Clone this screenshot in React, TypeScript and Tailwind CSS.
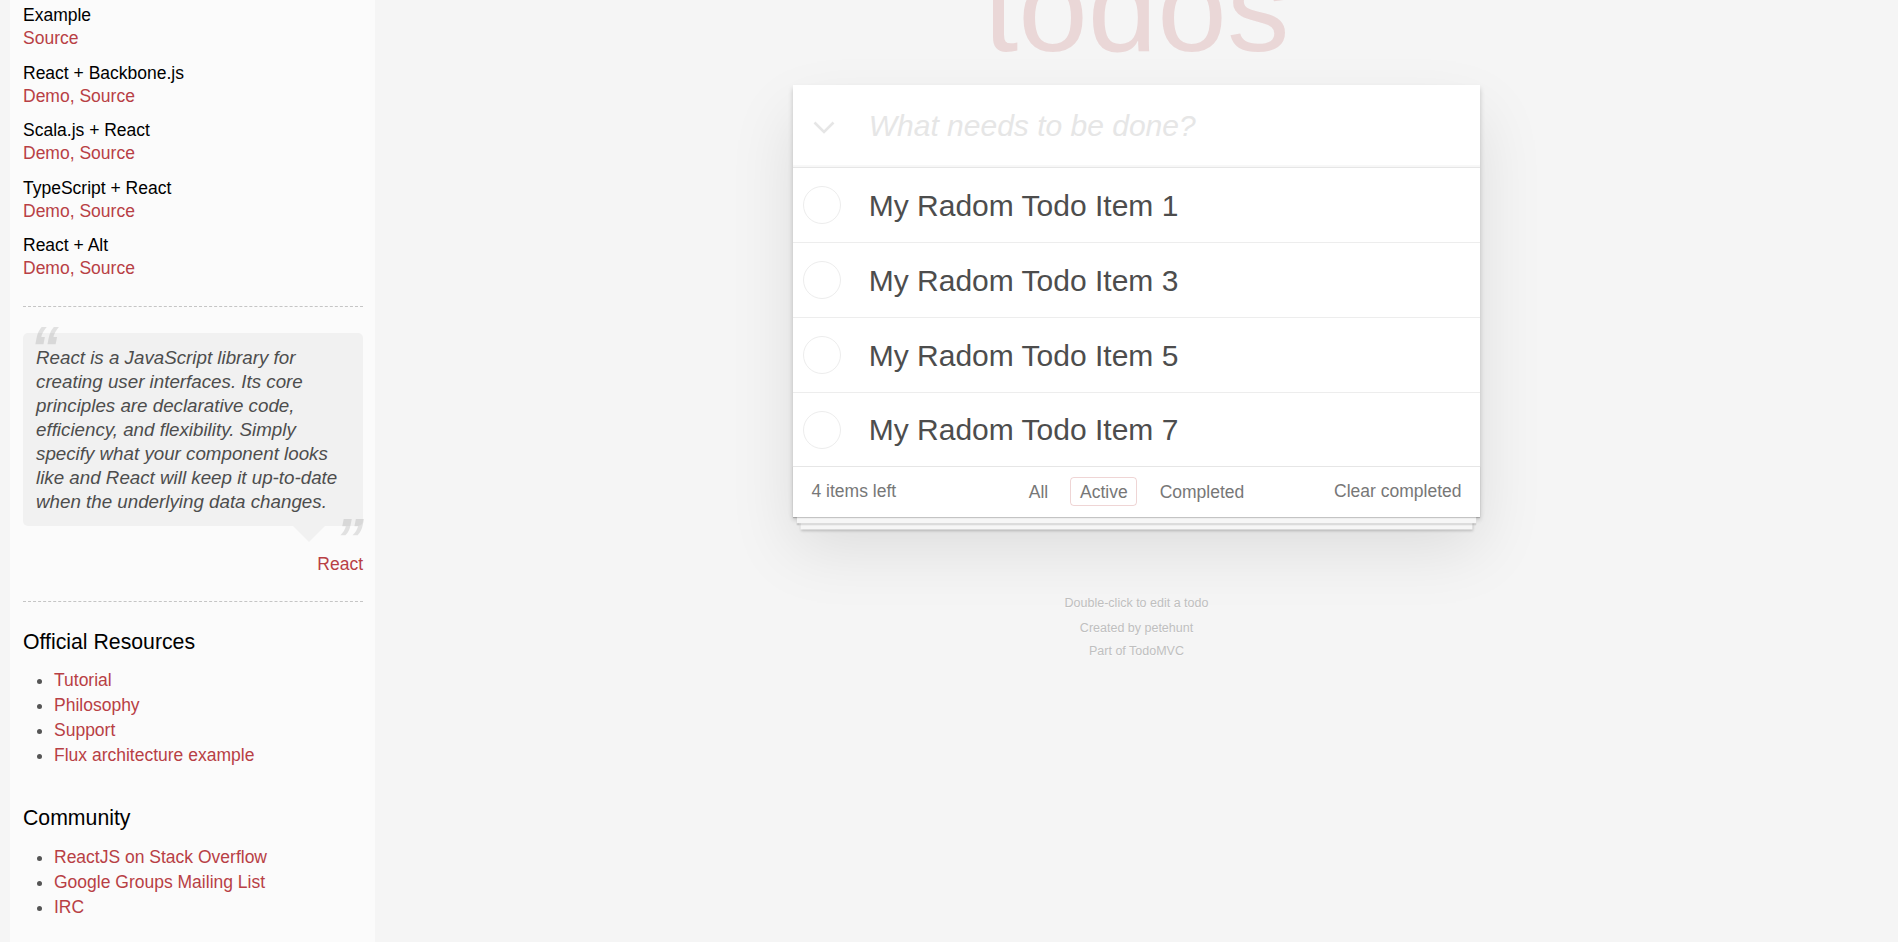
import React from 'react';

const examples = [
  { name: 'Example', links: ['Source'] },
  { name: 'React + Backbone.js', links: ['Demo', 'Source'] },
  { name: 'Scala.js + React', links: ['Demo', 'Source'] },
  { name: 'TypeScript + React', links: ['Demo', 'Source'] },
  { name: 'React + Alt', links: ['Demo', 'Source'] },
];

const resources = ['Tutorial', 'Philosophy', 'Support', 'Flux architecture example'];
const community = ['ReactJS on Stack Overflow', 'Google Groups Mailing List', 'IRC'];

const todos = ['My Radom Todo Item 1', 'My Radom Todo Item 3', 'My Radom Todo Item 5', 'My Radom Todo Item 7'];

function Sidebar() {
  return (
    <aside className="ml-[10px] w-[365px] shrink-0 bg-[#fbfbfb] pl-[13px] pr-[12px] pt-[4px] text-[17.5px] text-black">
      {/* examples */}
      <div className="flex flex-col gap-[11.5px]">
        {examples.map((ex) => (
          <div key={ex.name}>
            <h5 className="leading-[23px] text-black">{ex.name}</h5>
            <div className="leading-[23px] text-[#b83f45]">
              {ex.links.map((l, i) => (
                <span key={l}>
                  {i > 0 && ', '}
                  <a className="text-[#b83f45]">{l}</a>
                </span>
              ))}
            </div>
          </div>
        ))}
      </div>

      <hr className="mt-[26px] border-0 border-t border-dashed border-[#c5c5c5]" />

      {/* quote */}
      <blockquote className="relative mt-[26px] rounded-[5px] bg-[#f1f1f1] px-[13px] py-[12.5px] text-[18.75px] italic leading-[24px] text-[#4d4d4d]">
        <span className="absolute -top-[15px] left-[7px] text-[58px] font-bold italic leading-none text-black/10">“</span>
        React is a JavaScript library for creating user interfaces. Its core principles are declarative code, efficiency, and flexibility. Simply specify what your component looks like and React will keep it up-to-date when the underlying data changes.
        <span className="absolute -bottom-[42px] right-[-1px] text-[58px] font-bold italic leading-none text-black/10">”</span>
        <span className="absolute right-[38px] top-full h-0 w-0 border-x-[16px] border-t-[16px] border-x-transparent border-t-[#f1f1f1]" />
      </blockquote>
      <div className="mt-[26.5px] text-right leading-[23px]">
        <a className="text-[#b83f45]">React</a>
      </div>

      <hr className="mt-[25.5px] border-0 border-t border-dashed border-[#c5c5c5]" />

      <h3 className="mt-[26.2px] text-[21.25px] leading-[28px] text-black">Official Resources</h3>
      <ul className="mt-[11.8px] list-disc pl-[31px] leading-[25px] text-[#555]">
        {resources.map((r) => (
          <li key={r}>
            <a className="text-[#b83f45]">{r}</a>
          </li>
        ))}
      </ul>

      <h3 className="mt-[36.5px] text-[21.25px] leading-[28px] text-black">Community</h3>
      <ul className="mt-[12.2px] list-disc pl-[31px] leading-[25px] text-[#555]">
        {community.map((r) => (
          <li key={r}>
            <a className="text-[#b83f45]">{r}</a>
          </li>
        ))}
      </ul>
    </aside>
  );
}

function TodoApp() {
  return (
    <main className="flex flex-1 flex-col items-center">
      <h1 className="-mt-[55px] text-center text-[125px] font-normal leading-[125px] text-[rgba(175,47,47,0.15)]">todos</h1>

      <section className="mt-[15px] w-[687.5px] bg-white shadow-[0_2.5px_5px_0_rgba(0,0,0,0.2),0_31px_62px_0_rgba(0,0,0,0.1)]">
        {/* new todo */}
        <header className="flex h-[82px] items-center shadow-[inset_0_-2px_1px_rgba(0,0,0,0.03)]">
          <svg className="ml-[20px] mt-[3px] shrink-0" width="22" height="13" viewBox="0 0 22 13" fill="none">
            <polyline points="1.5,1.5 11,11 20.5,1.5" stroke="#e6e6e6" strokeWidth="2.6" strokeLinejoin="miter" />
          </svg>
          <input
            className="ml-[34px] mr-4 h-full flex-1 bg-transparent text-[30px] text-[#4d4d4d] outline-none placeholder:italic placeholder:text-[#e6e6e6]"
            placeholder="What needs to be done?"
          />
        </header>

        <ul className="border-t border-[#e6e6e6]">
          {todos.map((t) => (
            <li key={t} className="flex h-[75px] items-center border-b border-[#ededed] last:h-[73px] last:border-b-0">
              <span className="ml-[10px] size-[38px] shrink-0 rounded-full border-[1.5px] border-[#ededed]" />
              <label className="ml-[28px] text-[30px] text-[#4d4d4d]">{t}</label>
            </li>
          ))}
        </ul>

        <footer className="grid h-[51px] grid-cols-[1fr_auto_1fr] items-center border-t border-[#e6e6e6] px-[18.75px] pb-[1px] text-[17.5px] text-[#777] shadow-[0_1px_1px_rgba(0,0,0,0.2),0_10px_0_-3.75px_#f6f6f6,0_11.25px_1.25px_-3.75px_rgba(0,0,0,0.2),0_20px_0_-7.5px_#f6f6f6,0_21.25px_2.5px_-7.5px_rgba(0,0,0,0.2)]">
          <span className="justify-self-start">4 items left</span>
          <div className="flex gap-[12.4px]">
            <a className="rounded-[3.75px] border-[1.25px] border-transparent px-[8.75px] py-[3.75px] leading-[20px]">All</a>
            <a className="rounded-[3.75px] border-[1.25px] border-[rgba(175,47,47,0.2)] px-[8.75px] py-[3.75px] leading-[20px]">Active</a>
            <a className="rounded-[3.75px] border-[1.25px] border-transparent px-[8.75px] py-[3.75px] leading-[20px]">Completed</a>
          </div>
          <span className="justify-self-end">Clear completed</span>
        </footer>
      </section>

      <div className="mt-[78.5px] text-center text-[12.5px] leading-[15px] text-[#bfbfbf] [text-shadow:0_1px_0_rgba(255,255,255,0.5)]">
        <p>Double-click to edit a todo</p>
        <p className="mt-[10px]">Created by petehunt</p>
        <p className="mt-[8.5px]">Part of TodoMVC</p>
      </div>
    </main>
  );
}

export default function App() {
  return (
    <div className="flex h-[942px] overflow-hidden bg-[#f5f5f5] font-['Liberation_Sans',Arial,sans-serif] antialiased">
      <Sidebar />
      <TodoApp />
    </div>
  );
}
